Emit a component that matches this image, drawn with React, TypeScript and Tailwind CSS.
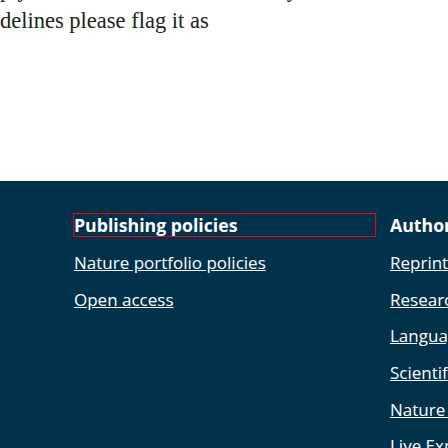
export default function App() {
  const authorLinks = [
    "Reprints & permissions",
    "Research data",
    "Language editing",
    "Scientific editing",
    "Nature Masterclasses",
    "Live Expert Trainer-led workshops",
  ];

  return (
    <div className="h-[448px] w-[448px] overflow-hidden bg-white">
      {/* tail of the comment notice above the footer */}
      <div className="h-[181px] overflow-hidden">
        <p className="-mt-[26px] font-['Liberation_Serif',serif] text-[22.5px] leading-[31px] text-[#222]">
          <span className="block whitespace-nowrap">ply with our terms or community</span>
          <span className="block whitespace-nowrap">delines please flag it as</span>
        </p>
      </div>

      <footer className="flex h-[267px] gap-[15px] bg-[#01324b] pl-[74px] pt-[33px] font-['Open_Sans',sans-serif] text-white">
        <div className="w-[301px] shrink-0">
          <h3 className="mb-[16px] text-[17.7px] font-bold leading-[22px] outline outline-[#ff0000]">
            Publishing policies
          </h3>
          <ul>
            <li className="mb-[14.7px] text-[17px] leading-[22px]">
              <a className="underline">Nature portfolio policies</a>
            </li>
            <li className="mb-[14.7px] text-[17px] leading-[22px]">
              <a className="underline">Open access</a>
            </li>
          </ul>
        </div>
        <div className="shrink-0 whitespace-nowrap">
          <h3 className="mb-[16px] text-[17.7px] font-bold leading-[22px]">
            Author &amp; Researcher services
          </h3>
          <ul>
            {authorLinks.map((label) => (
              <li key={label} className="mb-[14.7px] text-[17px] leading-[22px]">
                <a className="underline">{label}</a>
              </li>
            ))}
          </ul>
        </div>
      </footer>
    </div>
  );
}
